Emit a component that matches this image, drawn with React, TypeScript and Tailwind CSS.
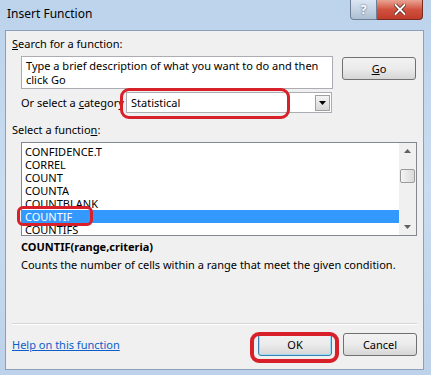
import React from "react";

const items = ["CONFIDENCE.T", "CORREL", "COUNT", "COUNTA", "COUNTBLANK", "COUNTIF", "COUNTIFS"];

function Button({ children, focused }: { children: React.ReactNode; focused?: boolean }) {
  return (
    <div
      className={`w-[74px] h-[23px] rounded-[3px] flex items-center justify-center text-black bg-gradient-to-b from-[#f2f2f2] via-[#ebebeb] to-[#d6d6d6] ${
        focused ? "border border-[#3c7fb1] shadow-[inset_0_0_0_1px_#9ddcf5]" : "border border-[#707070]"
      }`}
    >
      {children}
    </div>
  );
}

export default function App() {
  return (
    <div
      className="relative w-[431px] h-[375px] overflow-hidden bg-gradient-to-b from-[#bcd3ec] via-[#c9dcf0] to-[#bdd2ea] text-black text-[11px]"
      style={{ fontFamily: '"Noto Sans", "Open Sans", Arial, sans-serif' }}
    >
      {/* Title bar */}
      <div className="h-[30px] flex items-start justify-between">
        <div className="pl-[7px] pt-[6px] text-[12px] leading-[16px] text-black">Insert Function</div>
        <div className="flex mr-[8px]">
          <div className="w-[27px] h-[20px] rounded-bl-[4px] border border-t-0 border-[#6d7f96] bg-gradient-to-b from-[#dbe6f3] to-[#aebfd3] flex items-center justify-center text-[12px] font-bold text-white [text-shadow:0_0_2px_#3b4b5f]">
            ?
          </div>
          <div className="w-[46px] h-[20px] rounded-br-[4px] border border-l-0 border-t-0 border-[#7a2a22] bg-gradient-to-b from-[#e8a493] via-[#d0523f] to-[#c13b2a] flex items-center justify-center">
            <svg width="12" height="11" viewBox="0 0 12 11">
              <path d="M1.5 1 L10.5 10 M10.5 1 L1.5 10" stroke="#4a1810" strokeWidth="3.4" strokeLinecap="round" />
              <path d="M1.5 1 L10.5 10 M10.5 1 L1.5 10" stroke="#ffffff" strokeWidth="2" strokeLinecap="round" />
            </svg>
          </div>
        </div>
      </div>

      {/* Client area */}
      <div className="ml-[5px] mr-[7px] h-[340px] border border-[#8b9fba] bg-[#f0f0f0] leading-[14px] flex flex-col">
        <div className="pl-[6px] mt-[6px] h-[14px]">
          <u>S</u>earch for a function:
        </div>

        <div className="flex items-start mt-[5px] pl-[15px]">
          <div className="w-[312px] h-[33px] bg-white border border-[#abadb3] pl-[4px] pt-[2px] leading-[14px]">
            Type a brief description of what you want to do and then
            <br />
            click Go
          </div>
          <div className="ml-[9px] mt-[1px]">
            <Button>
              <u>G</u>o
            </Button>
          </div>
        </div>

        <div className="flex items-center mt-[3px] pl-[15px] h-[21px]">
          <div className="w-[105px] whitespace-nowrap">
            Or select a <u>c</u>ategory
          </div>
          <div className="w-[206px] h-[21px] bg-white border border-[#abadb3] flex items-center justify-between pl-[4px] pr-[1px]">
            <span>Statistical</span>
            <div className="w-[15px] h-[16px] border border-[#a0a0a0] bg-gradient-to-b from-[#f4f4f4] to-[#d8d8d8] flex items-center justify-center">
              <svg width="7" height="4" viewBox="0 0 7 4">
                <path d="M0 0 H7 L3.5 4 Z" fill="#000" />
              </svg>
            </div>
          </div>
        </div>

        <div className="pl-[6px] mt-[10px] h-[14px]">
          Select a functio<u>n</u>:
        </div>

        <div className="ml-[15px] mt-[5px] w-[396px] h-[94px] bg-white border border-[#828790] flex">
          <div className="flex-1 pt-[2px]">
            {items.map((it) => (
              <div
                key={it}
                className={`h-[13px] pl-[3px] leading-[13px] ${it === "COUNTIF" ? "bg-[#3399ff] text-white" : ""}`}
              >
                {it}
              </div>
            ))}
          </div>
          <div className="w-[17px] bg-[#f0f0f0] flex flex-col items-center pt-[6px] pb-[6px]">
            <svg width="7" height="4" viewBox="0 0 7 4">
              <path d="M0 4 H7 L3.5 0 Z" fill="#606060" />
            </svg>
            <div className="mt-[16px] w-[15px] h-[14px] rounded-[2px] border border-[#9a9a9a] bg-gradient-to-r from-[#f4f4f4] to-[#dadada]" />
            <svg className="mt-auto" width="7" height="4" viewBox="0 0 7 4">
              <path d="M0 0 H7 L3.5 4 Z" fill="#606060" />
            </svg>
          </div>
        </div>

        <div className="pl-[15px] mt-[4px] h-[14px] font-bold">COUNTIF(range,criteria)</div>
        <div className="pl-[15px] mt-[4px] h-[14px] whitespace-nowrap">
          Counts the number of cells within a range that meet the given condition.
        </div>

        <div className="mx-[6px] mt-[51px] h-[2px] border-t border-[#d5d5d5] border-b border-b-white" />

        <div className="flex items-center justify-between pl-[6px] pr-[6px] mt-[8px]">
          <span className="text-[#0b5ec9] underline">Help on this function</span>
          <div className="flex gap-[11px]">
            <Button focused>OK</Button>
            <Button>Cancel</Button>
          </div>
        </div>
      </div>

      {/* Red annotation outlines */}
      <div className="absolute left-[120px] top-[88px] w-[170px] h-[31px] rounded-[9px] border-[3px] border-[#d8202b]" />
      <div className="absolute left-[17px] top-[206px] w-[76px] h-[20px] rounded-[6px] border-[3px] border-[#d8202b]" />
      <div className="absolute left-[250px] top-[332px] w-[89px] h-[31px] rounded-[9px] border-[4px] border-[#d8202b]" />
    </div>
  );
}
